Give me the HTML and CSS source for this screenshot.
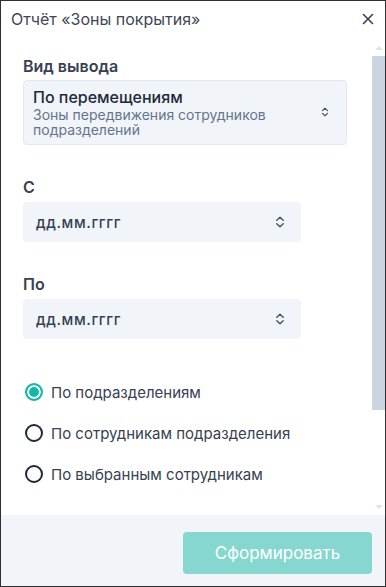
FILE: index.html
```html
<!DOCTYPE html>
<html lang="ru">
<head>
  <meta charset="UTF-8">
  <meta name="viewport" content="width=device-width, initial-scale=1.0">
  <title>Отчёт «Зоны покрытия»</title>
  <link rel="stylesheet" href="styles.css">
</head>
<body>

<div class="dialog">
  <div class="dialog-header">
    <span class="dialog-title">Отчёт «Зоны покрытия»</span>
    <svg class="close-icon" width="12" height="12" viewBox="0 0 12 12">
      <path d="M1.5 1.5 L10.5 10.5 M10.5 1.5 L1.5 10.5" stroke="#374151" stroke-width="1.6" stroke-linecap="round"/>
    </svg>
  </div>

  <div class="dialog-main">
    <div class="dialog-content">
      <div class="field">
        <div class="field-label">Вид вывода</div>
        <div class="select select-big">
          <div class="select-text">
            <div class="select-title">По перемещениям</div>
            <div class="select-sub">Зоны передвижения сотрудников подразделений</div>
          </div>
          <svg class="chevrons" width="10" height="14" viewBox="0 0 10 14">
            <path d="M1.8 5.2 L5 2.2 L8.2 5.2 M1.8 8.8 L5 11.8 L8.2 8.8" fill="none" stroke="#475569" stroke-width="1.5" stroke-linecap="round" stroke-linejoin="round"/>
          </svg>
        </div>
      </div>

      <div class="field">
        <div class="field-label">С</div>
        <div class="select select-date">
          <span class="date-text">дд.мм.гггг</span>
          <svg class="chevrons" width="10" height="14" viewBox="0 0 10 14">
            <path d="M1.8 5.2 L5 2.2 L8.2 5.2 M1.8 8.8 L5 11.8 L8.2 8.8" fill="none" stroke="#475569" stroke-width="1.5" stroke-linecap="round" stroke-linejoin="round"/>
          </svg>
        </div>
      </div>

      <div class="field">
        <div class="field-label">По</div>
        <div class="select select-date">
          <span class="date-text">дд.мм.гггг</span>
          <svg class="chevrons" width="10" height="14" viewBox="0 0 10 14">
            <path d="M1.8 5.2 L5 2.2 L8.2 5.2 M1.8 8.8 L5 11.8 L8.2 8.8" fill="none" stroke="#475569" stroke-width="1.5" stroke-linecap="round" stroke-linejoin="round"/>
          </svg>
        </div>
      </div>

      <div class="radio-group">
        <label class="radio-row">
          <span class="radio checked"></span>
          <span>По подразделениям</span>
        </label>
        <label class="radio-row">
          <span class="radio"></span>
          <span>По сотрудникам подразделения</span>
        </label>
        <label class="radio-row">
          <span class="radio"></span>
          <span>По выбранным сотрудникам</span>
        </label>
      </div>
    </div>

    <div class="scrollbar">
      <div class="scroll-arrow up"></div>
      <div class="scroll-thumb"></div>
      <div class="scroll-rest"></div>
      <div class="scroll-arrow down"></div>
    </div>
  </div>

  <div class="dialog-footer">
    <button class="submit-btn" disabled>Сформировать</button>
  </div>
</div>

</body>
</html>
```

FILE: styles.css
```css
body {
  margin: 0;
  font-family: 'Inter', 'Noto Sans', sans-serif;
  background-color: #fff;
}

.dialog {
  width: 386px;
  height: 587px;
  box-sizing: border-box;
  border: 1px solid #2f2f2f;
  display: flex;
  flex-direction: column;
  background-color: #fff;
}

.dialog-header {
  height: 39px;
  flex-shrink: 0;
  display: flex;
  align-items: center;
  justify-content: space-between;
  padding: 0 11px 0 10px;
}

.dialog-title {
  font-size: 16px;
  color: #3f4654;
  margin-top: -3px;
}

.close-icon {
  margin-top: -4px;
}

.dialog-main {
  flex: 1;
  display: flex;
  overflow: hidden;
}

.dialog-content {
  flex: 1;
  padding: 16px 25px 0 22px;
  overflow: hidden;
}

.field {
  margin-bottom: 32px;
}

.field-label {
  font-size: 16px;
  line-height: 20px;
  font-weight: 600;
  color: #374151;
  margin-bottom: 5px;
}

.select {
  display: flex;
  align-items: center;
  justify-content: space-between;
  background-color: #f1f5f9;
  border-radius: 4px;
  box-sizing: border-box;
}

.select-big {
  border: 1px solid #e2e8f0;
  padding: 6px 17px 7px 9px;
  margin-top: -1px;
}

.select-title {
  font-size: 16px;
  line-height: 20px;
  font-weight: 500;
  color: #1e293b;
}

.select-sub {
  font-size: 14px;
  line-height: 15px;
  color: #64748b;
  padding-right: 20px;
}

.select-date {
  width: 278px;
  height: 40px;
  padding: 0 16px 0 13px;
}

.date-text {
  font-size: 15px;
  font-weight: 500;
  color: #334155;
  letter-spacing: 0.6px;
}

.radio-group {
  display: flex;
  flex-direction: column;
  gap: 21px;
  padding: 11px 0 0 2px;
}

.radio-row {
  display: flex;
  align-items: center;
  gap: 8px;
  height: 20px;
  font-size: 15px;
  color: #374151;
}

.radio {
  width: 18px;
  height: 18px;
  box-sizing: border-box;
  border: 2px solid #1e293b;
  border-radius: 50%;
  background-color: #fff;
}

.radio.checked {
  border-color: #14b8a6;
  background-color: #14b8a6;
  box-shadow: inset 0 0 0 2px #fff;
}

.scrollbar {
  width: 13px;
  display: flex;
  flex-direction: column;
  background-color: #fff;
}

.scroll-arrow {
  height: 16px;
  display: flex;
  justify-content: center;
}

.scroll-arrow.up::after {
  content: '';
  margin-top: 6px;
  border-left: 4px solid transparent;
  border-right: 4px solid transparent;
  border-bottom: 4px solid #dde3ea;
  height: 0;
}

.scroll-arrow.down::after {
  content: '';
  margin-top: 6px;
  border-left: 4px solid transparent;
  border-right: 4px solid transparent;
  border-top: 4px solid #dde3ea;
  height: 0;
}

.scroll-thumb {
  height: 354px;
  background-color: #cbd5e1;
}

.scroll-rest {
  flex: 1;
}

.dialog-footer {
  height: 71px;
  flex-shrink: 0;
  background-color: #f1f5f9;
  display: flex;
  justify-content: flex-end;
  align-items: flex-start;
  padding: 17px 13px 0 0;
  box-sizing: border-box;
}

.submit-btn {
  width: 189px;
  height: 42px;
  border: none;
  border-radius: 4px;
  background-color: #86d7cf;
  color: #fff;
  font-family: 'Inter', 'Noto Sans', sans-serif;
  font-size: 17px;
}
```
